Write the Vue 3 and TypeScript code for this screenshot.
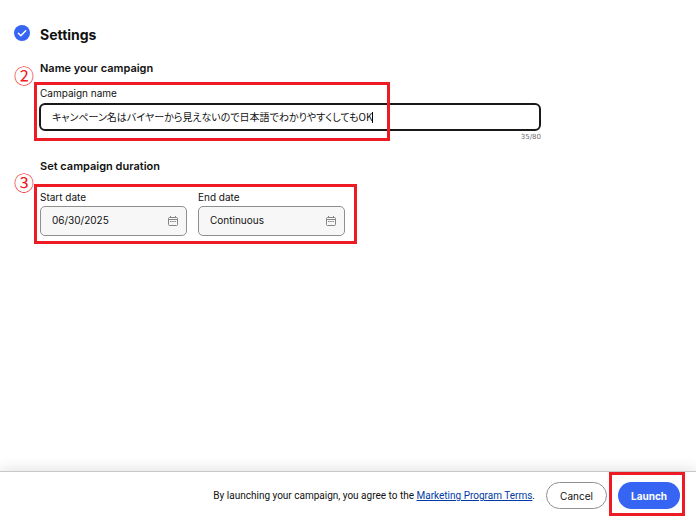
<script setup lang="ts">
import { computed, ref } from 'vue'

const maxLength = 80
const campaignName = ref('キャンペーン名はバイヤーから見えないので日本語でわかりやすくしてもOK')
const startDate = ref('06/30/2025')
const endDate = ref('Continuous')
const counter = computed(() => `${campaignName.value.length}/${maxLength}`)
</script>

<template>
  <div class="page">
    <main class="settings">
      <header class="title-row">
        <svg class="check" viewBox="0 0 16 16" aria-hidden="true">
          <circle cx="8" cy="8" r="8" fill="#3665f3" />
          <path d="M4.4 8.3l2.4 2.4 4.9-5" fill="none" stroke="#fff" stroke-width="1.5" stroke-linecap="round" stroke-linejoin="round" />
        </svg>
        <h1>Settings</h1>
      </header>

      <section class="group">
        <h2>Name your campaign</h2>
        <div class="marked">
          <label for="campaign-name">Campaign name</label>
          <div class="name-box">
            <input id="campaign-name" v-model="campaignName" class="name-input" type="text" :maxlength="maxLength" />
            <span class="caret"></span>
          </div>
          <span class="mark mark-name"></span>
          <span class="step step-name">②</span>
        </div>
        <div class="counter">{{ counter }}</div>
      </section>

      <section class="group">
        <h2>Set campaign duration</h2>
        <div class="marked dates">
          <div class="date-field">
            <label for="start-date">Start date</label>
            <div class="date-box">
              <input id="start-date" v-model="startDate" type="text" />
              <svg class="calendar" viewBox="0 0 10 10" aria-hidden="true">
                <path d="M2.5 0v1.5M7.5 0v1.5M.5 3.5h9" />
                <rect x=".5" y="1.5" width="9" height="8" rx="1" />
                <path d="M2 5.5h6" stroke-dasharray="1.5 .7" />
              </svg>
            </div>
          </div>
          <div class="date-field">
            <label for="end-date">End date</label>
            <div class="date-box">
              <input id="end-date" v-model="endDate" type="text" />
              <svg class="calendar" viewBox="0 0 10 10" aria-hidden="true">
                <path d="M2.5 0v1.5M7.5 0v1.5M.5 3.5h9" />
                <rect x=".5" y="1.5" width="9" height="8" rx="1" />
                <path d="M2 5.5h6" stroke-dasharray="1.5 .7" />
              </svg>
            </div>
          </div>
          <span class="mark mark-dates"></span>
          <span class="step step-dates">③</span>
        </div>
      </section>
    </main>

    <footer class="actions">
      <p>By launching your campaign, you agree to the <a href="#terms">Marketing Program Terms</a>.</p>
      <button class="cancel" type="button">Cancel</button>
      <div class="launch-wrap">
        <button class="launch" type="button">Launch</button>
        <span class="mark mark-launch"></span>
      </div>
    </footer>
  </div>
</template>

<style>
body {
  margin: 0;
  background: #fff;
}
</style>

<style scoped>
* {
  box-sizing: border-box;
}
.page {
  display: flex;
  flex-direction: column;
  min-height: 100vh;
  color: #111;
  font-family: Inter, "Noto Sans CJK JP", sans-serif;
  font-size: 10px;
}
.settings {
  flex: 1;
  padding: 25px 14px 0;
}
.title-row {
  display: flex;
  align-items: center;
  gap: 10px;
  height: 20px;
}
.check {
  width: 16px;
  height: 16px;
  margin-bottom: 4px;
}
h1,
h2,
p {
  margin: 0;
}
h1 {
  font-size: 14px;
  line-height: 20px;
  font-weight: 700;
}
.group {
  max-width: 527px;
  margin-top: 15px;
  padding-left: 26px;
}
h2 {
  font-size: 11px;
  line-height: 16px;
  font-weight: 600;
}
.marked {
  position: relative;
  margin-top: 10px;
}
.marked label {
  display: block;
  line-height: 14px;
}
.name-box {
  position: relative;
  margin: 3px 0 0 -1px;
}
.name-input {
  display: block;
  width: 100%;
  height: 28px;
  padding: 0 11px 2px;
  border: 2px solid #191919;
  border-radius: 6px;
  background: #fff;
  color: #111;
  font: inherit;
  font-family: "Noto Sans CJK JP", sans-serif;
  font-feature-settings: "palt";
  outline: none;
}
.caret {
  position: absolute;
  top: 9px;
  left: 333px;
  width: 1px;
  height: 11px;
  background: #000;
}
.counter {
  color: #707070;
  font-family: "DejaVu Sans", sans-serif;
  font-size: 7px;
  line-height: 12px;
  text-align: right;
}
.dates {
  display: flex;
  gap: 11px;
  margin-top: 16px;
}
.date-field {
  width: 147px;
}
.date-box {
  display: flex;
  align-items: center;
  height: 30px;
  margin-top: 2px;
  padding: 0 8px 0 11px;
  border: 1px solid #8f8f8f;
  border-radius: 5px;
  background: #f7f7f7;
}
.date-box input {
  flex: 1;
  min-width: 0;
  padding: 0 0 2px;
  border: 0;
  background: none;
  color: #111;
  font: inherit;
  outline: none;
}
.calendar {
  width: 10px;
  height: 10px;
  fill: none;
  stroke: #858585;
  stroke-width: 1;
}
.mark {
  position: absolute;
  border: 3px solid #ed1c24;
  pointer-events: none;
}
.mark-name {
  top: -4px;
  left: -6px;
  width: 356px;
  height: 59px;
}
.mark-dates {
  top: -6px;
  left: -6px;
  width: 323px;
  height: 60px;
}
.step {
  position: absolute;
  left: -26px;
  color: #ed1c24;
  font-family: "Noto Sans CJK JP", sans-serif;
  font-size: 20px;
  line-height: 20px;
}
.step-name {
  top: -20px;
}
.step-dates {
  top: -17px;
}
.actions {
  display: flex;
  align-items: center;
  justify-content: flex-end;
  height: 46px;
  padding: 2px 16px 0 14px;
  border-top: 1px solid #c7c7c7;
  box-shadow: 0 -3px 12px rgba(0, 0, 0, 0.1);
}
.actions p {
  font-family: Roboto, sans-serif;
}
.actions a {
  color: #003aa5;
  text-decoration: underline;
}
.actions button {
  height: 27px;
  padding: 0;
  border-radius: 14px;
  font: inherit;
}
.actions .cancel {
  width: 61px;
  margin: 0 11px;
  border: 1px solid #8f8f8f;
  background: #fff;
  color: #111;
}
.launch-wrap {
  position: relative;
}
.actions .launch {
  width: 62px;
  border: 0;
  background: #3665f3;
  color: #fff;
  font-weight: 700;
}
.mark-launch {
  top: -10px;
  left: -9px;
  width: 76px;
  height: 44px;
}
</style>
